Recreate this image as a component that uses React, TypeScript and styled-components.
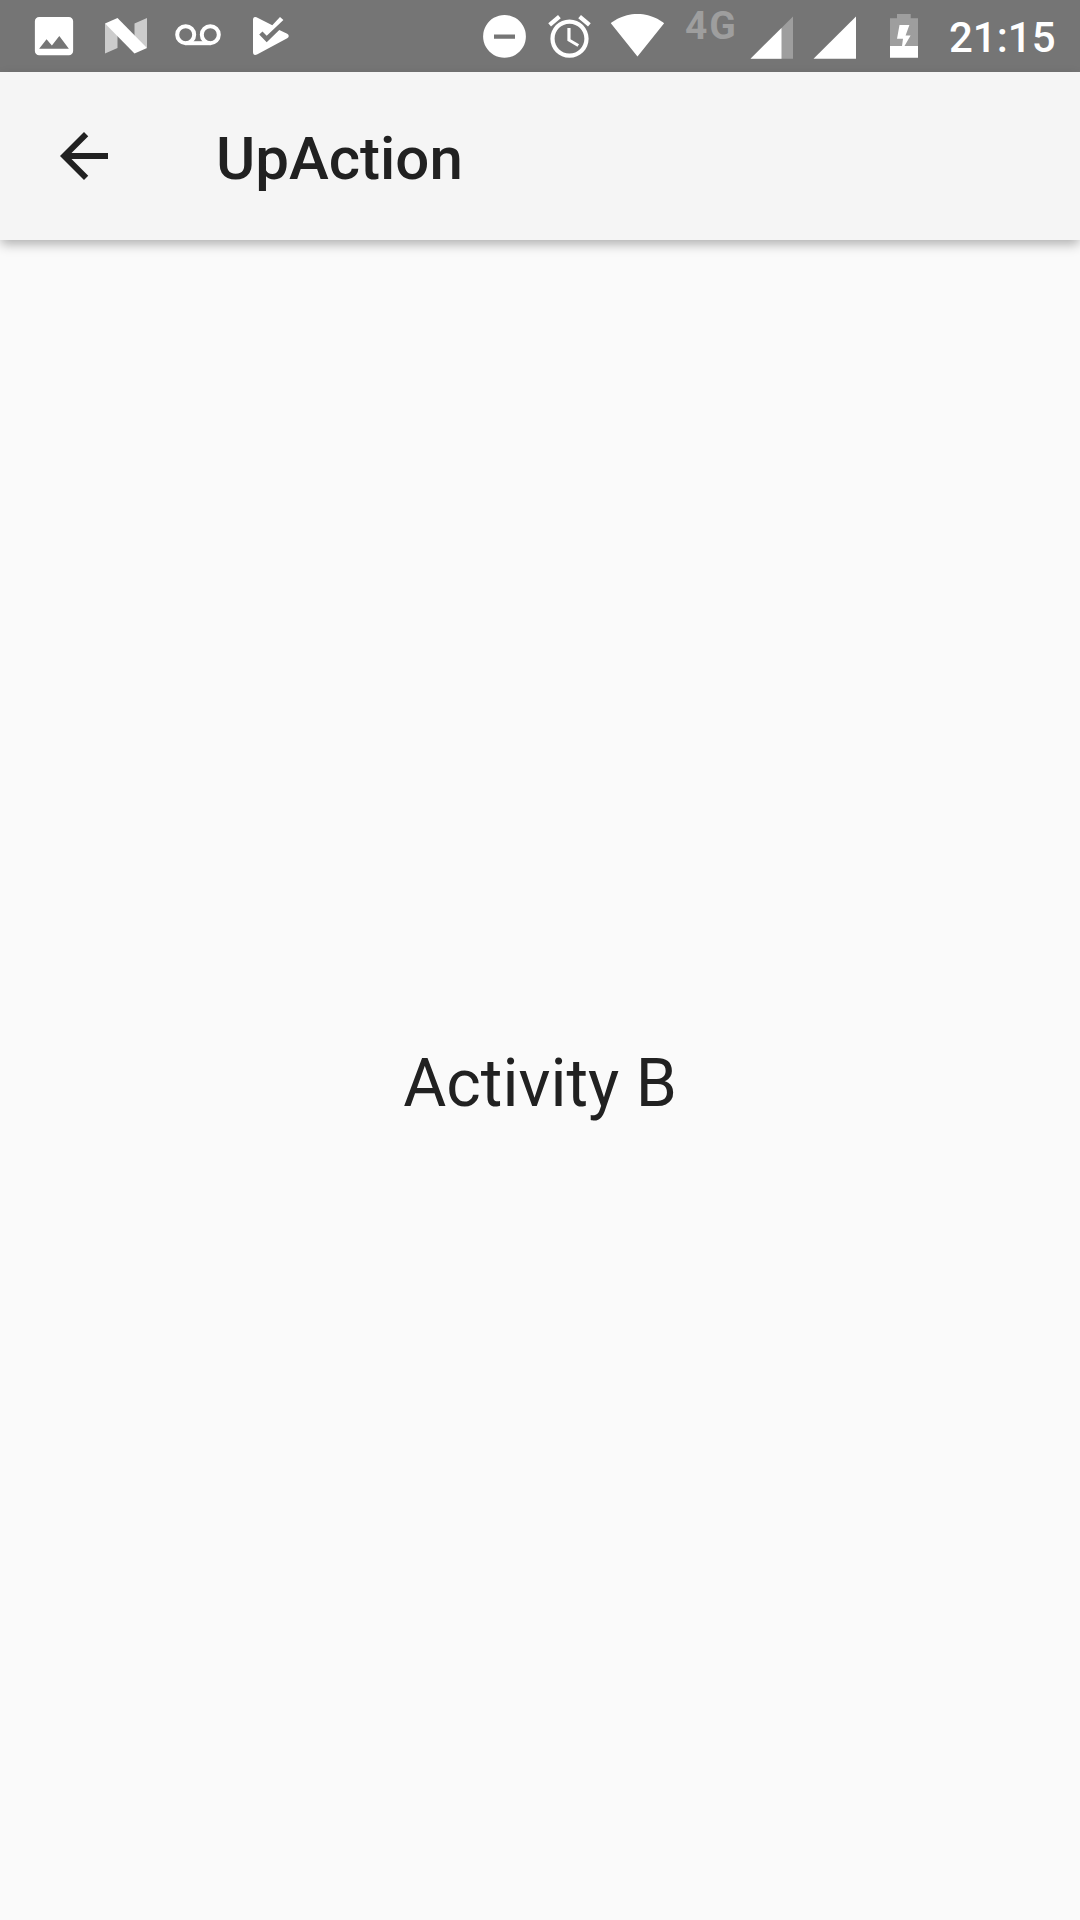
import React from "react";
import styled, { createGlobalStyle } from "styled-components";

const GlobalStyle = createGlobalStyle`
  html, body { margin: 0; padding: 0; background: #fafafa; }
  * { box-sizing: border-box; }
`;

const Screen = styled.div`
  width: 1080px;
  height: 1920px;
  display: flex;
  flex-direction: column;
  overflow: hidden;
  background: #fafafa;
  color: #212121;
  font-family: Roboto, "Noto Sans", sans-serif;
`;

const StatusBar = styled.header`
  display: flex;
  justify-content: space-between;
  flex: 0 0 72px;
  height: 72px;
  background: #757575;
  color: #fff;
`;

const Notifications = styled.div`
  display: flex;
  padding-left: 18px;
`;

const SystemIcons = styled.div`
  display: flex;
  align-items: flex-start;
  padding-right: 24px;
`;

const Glyph = styled.svg<{ $width: number; $gap?: number }>`
  display: block;
  flex: none;
  width: ${(p) => p.$width}px;
  height: 72px;
  margin-left: ${(p) => p.$gap ?? 0}px;
  fill: #fff;
`;

const NetworkType = styled.span`
  width: 52px;
  margin-left: 20px;
  padding-top: 4px;
  font-size: 39px;
  line-height: 44px;
  font-weight: 700;
  letter-spacing: 1.8px;
  color: #9e9e9e;
`;

const Clock = styled.time`
  width: 107px;
  margin-left: 31px;
  font-size: 42px;
  line-height: 76px;
  font-weight: 500;
  white-space: nowrap;
`;

const AppBar = styled.div`
  display: flex;
  align-items: center;
  flex: 0 0 168px;
  padding-left: 48px;
  background: #f5f5f5;
  box-shadow: 0 5px 11px -1px rgba(0, 0, 0, 0.31);
`;

const BackButton = styled.button`
  width: 72px;
  height: 72px;
  padding: 0;
  border: 0;
  background: none;
  color: inherit;

  svg {
    display: block;
    width: 72px;
    height: 72px;
    fill: currentColor;
  }
`;

const Title = styled.h1`
  margin: 0 0 0 96px;
  padding-top: 6px;
  font-size: 60px;
  line-height: 70px;
  font-weight: 500;
`;

const Content = styled.main`
  flex: 1;
  display: flex;
  align-items: center;
  justify-content: center;
`;

const Label = styled.p`
  margin: 0;
  padding-top: 8px;
  font-size: 66px;
  line-height: 78px;
`;

export default function App() {
  return (
    <Screen>
      <GlobalStyle />
      <StatusBar>
        <Notifications>
          <Glyph $width={72} viewBox="0 0 72 72">
            <path
              transform="translate(10.5 10.5) scale(2.125)"
              d="M21 19V5c0-1.1-.9-2-2-2H5c-1.1 0-2 .9-2 2v14c0 1.1.9 2 2 2h14c1.1 0 2-.9 2-2zM8.5 13.5l2.5 3.01L14.5 12l4.5 6H5l3.5-4.5z"
            />
          </Glyph>
          <Glyph $width={72} viewBox="0 0 72 72">
            <path fill="#ccc" d="M15 23.5L27.5 32V48L15 53.5zM44.5 23.5L57 18V48L44.5 40z" />
            <path d="M15 23.5L27.5 18L57 48L44.5 53.5z" />
          </Glyph>
          <Glyph $width={72} viewBox="0 0 72 72">
            <g fill="none" stroke="#fff" strokeWidth="4">
              <circle cx="23.7" cy="34.7" r="8.5" />
              <circle cx="48.3" cy="34.7" r="8.5" />
              <path d="M23.7 43.2H48.3" />
            </g>
          </Glyph>
          <Glyph $width={72} viewBox="0 0 72 72">
            <path d="M19 20Q19 16 22.5 17.2L38.3 25.2L46 17L49.4 20L32.7 35.8L28.5 31.4L25.2 34.5L32.7 42.3L45.3 30L53.2 33.8Q56.3 36 53.2 38.3L23 54.6Q19 56 19 52z" />
          </Glyph>
        </Notifications>

        <SystemIcons>
          <Glyph $width={51} viewBox="0 0 51 72">
            <path fillRule="evenodd" d="M25.5 15a21.4 21.4 0 1 0 .01 0zM15 34.6H36V38.8H15z" />
          </Glyph>
          <Glyph $width={51} $gap={14} viewBox="0 0 51 72">
            <path
              transform="translate(0 11) scale(2.125)"
              d="M22 5.72l-4.6-3.86-1.29 1.53 4.6 3.86L22 5.72zM7.88 3.39L6.6 1.86 2 5.71l1.29 1.53 4.59-3.85zM12.5 8H11v6l4.75 2.85.75-1.23-4-2.37V8zM12 4c-4.97 0-9 4.03-9 9s4.02 9 9 9c4.97 0 9-4.03 9-9s-4.03-9-9-9zm0 16c-3.87 0-7-3.13-7-7s3.13-7 7-7 7 3.13 7 7-3.13 7-7 7z"
            />
          </Glyph>
          <Glyph $width={55} $gap={15} viewBox="0 0 55 72">
            <path
              transform="translate(0 7.2) scale(2.29)"
              d="M12.01 21.49L23.64 7c-.45-.34-4.93-4-11.64-4C5.28 3 .81 6.66.36 7l11.63 14.49.02 0z"
            />
          </Glyph>
          <NetworkType>4G</NetworkType>
          <Glyph $width={43} $gap={13} viewBox="0 0 43 72">
            <path fill="#9e9e9e" d="M0.5 58.8L43 16.4V58.8z" />
            <path d="M0.5 58.8L31.5 27.9V58.8z" />
          </Glyph>
          <Glyph $width={43} $gap={20} viewBox="0 0 43 72">
            <path d="M0.5 58.8L43 16.4V58.8z" />
          </Glyph>
          <Glyph $width={28} $gap={34} viewBox="0 0 28 72">
            <path fill="#9e9e9e" d="M0 18.2H7V14H20.7V18.2H28V46H0z" />
            <path d="M0 46H12L13 38.8H7L9.5 25H19.4L15.6 35.5H20.6L14.5 46H28V57.8H0z" />
          </Glyph>
          <Clock>21:15</Clock>
        </SystemIcons>
      </StatusBar>

      <AppBar>
        <BackButton aria-label="Navigate up">
          <svg viewBox="0 0 24 24">
            <path d="M20 11H7.83l5.59-5.59L12 4l-8 8 8 8 1.41-1.41L7.83 13H20v-2z" />
          </svg>
        </BackButton>
        <Title>UpAction</Title>
      </AppBar>

      <Content>
        <Label>Activity B</Label>
      </Content>
    </Screen>
  );
}
